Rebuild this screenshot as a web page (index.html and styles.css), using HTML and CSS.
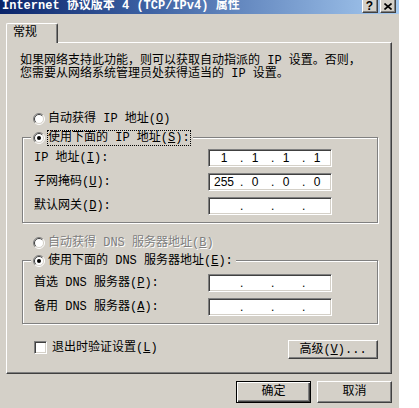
FILE: index.html
```html
<!DOCTYPE html>
<html lang="zh-CN">
<head>
<meta charset="utf-8">
<title>Internet 协议版本 4 (TCP/IPv4) 属性</title>
<link rel="stylesheet" href="styles.css">
</head>
<body>
<div class="dialog">
  <div class="titlebar">
    <span class="title">Internet 协议版本 4 (TCP/IPv4) 属性</span>
    <div class="cap-btns">
      <span class="cap-btn">?</span>
      <span class="cap-btn"><svg width="8" height="7" viewBox="0 0 8 7"><path d="M0.5 0.5L7.5 6.5M7.5 0.5L0.5 6.5" stroke="#000" stroke-width="1.6" fill="none"/></svg></span>
    </div>
  </div>

  <div class="tabs"><div class="tab">常规</div></div>

  <div class="panel">
    <p class="intro">如果网络支持此功能，则可以获取自动指派的 IP 设置。否则，<br>您需要从网络系统管理员处获得适当的 IP 设置。</p>

    <div class="radio-row first">
      <svg class="radio" width="12" height="12" viewBox="0 0 12 12"><circle cx="6" cy="6" r="5" fill="#fff"/><path d="M2.1 9.9A5.5 5.5 0 0 1 9.9 2.1" fill="none" stroke="#808080"/><path d="M9.9 2.1A5.5 5.5 0 0 1 2.1 9.9" fill="none" stroke="#fff"/><path d="M2.8 9.2A4.5 4.5 0 0 1 9.2 2.8" fill="none" stroke="#404040"/><path d="M9.2 2.8A4.5 4.5 0 0 1 2.8 9.2" fill="none" stroke="#d4d0c8"/></svg>
      <span class="lbl">自动获得 IP 地址(<u>O</u>)</span>
    </div>

    <div class="group ip-group">
      <div class="caption">
        <svg class="radio" width="12" height="12" viewBox="0 0 12 12"><circle cx="6" cy="6" r="5" fill="#fff"/><path d="M2.1 9.9A5.5 5.5 0 0 1 9.9 2.1" fill="none" stroke="#808080"/><path d="M9.9 2.1A5.5 5.5 0 0 1 2.1 9.9" fill="none" stroke="#fff"/><path d="M2.8 9.2A4.5 4.5 0 0 1 9.2 2.8" fill="none" stroke="#404040"/><path d="M9.2 2.8A4.5 4.5 0 0 1 2.8 9.2" fill="none" stroke="#d4d0c8"/><circle cx="6" cy="6" r="2" fill="#000"/></svg>
        <span class="lbl focus">使用下面的 IP 地址(<u>S</u>):</span>
      </div>
      <div class="fields">
        <span class="flabel">IP 地址(<u>I</u>):</span>
        <div class="ipbox"><span class="oct">1</span><span class="dot">.</span><span class="oct">1</span><span class="dot">.</span><span class="oct">1</span><span class="dot">.</span><span class="oct">1</span></div>
        <span class="flabel">子网掩码(<u>U</u>):</span>
        <div class="ipbox"><span class="oct">255</span><span class="dot">.</span><span class="oct">0</span><span class="dot">.</span><span class="oct">0</span><span class="dot">.</span><span class="oct">0</span></div>
        <span class="flabel">默认网关(<u>D</u>):</span>
        <div class="ipbox"><span class="oct"></span><span class="dot">.</span><span class="oct"></span><span class="dot">.</span><span class="oct"></span><span class="dot">.</span><span class="oct"></span></div>
      </div>
    </div>

    <div class="radio-row dns-auto">
      <svg class="radio" width="12" height="12" viewBox="0 0 12 12"><circle cx="6" cy="6" r="5" fill="#fff"/><path d="M2.1 9.9A5.5 5.5 0 0 1 9.9 2.1" fill="none" stroke="#808080"/><path d="M9.9 2.1A5.5 5.5 0 0 1 2.1 9.9" fill="none" stroke="#fff"/><path d="M2.8 9.2A4.5 4.5 0 0 1 9.2 2.8" fill="none" stroke="#404040"/><path d="M9.2 2.8A4.5 4.5 0 0 1 2.8 9.2" fill="none" stroke="#d4d0c8"/></svg>
      <span class="lbl disabled">自动获得 DNS 服务器地址(<u>B</u>)</span>
    </div>

    <div class="group dns-group">
      <div class="caption">
        <svg class="radio" width="12" height="12" viewBox="0 0 12 12"><circle cx="6" cy="6" r="5" fill="#fff"/><path d="M2.1 9.9A5.5 5.5 0 0 1 9.9 2.1" fill="none" stroke="#808080"/><path d="M9.9 2.1A5.5 5.5 0 0 1 2.1 9.9" fill="none" stroke="#fff"/><path d="M2.8 9.2A4.5 4.5 0 0 1 9.2 2.8" fill="none" stroke="#404040"/><path d="M9.2 2.8A4.5 4.5 0 0 1 2.8 9.2" fill="none" stroke="#d4d0c8"/><circle cx="6" cy="6" r="2" fill="#000"/></svg>
        <span class="lbl">使用下面的 DNS 服务器地址(<u>E</u>):</span>
      </div>
      <div class="fields dns-fields">
        <span class="flabel">首选 DNS 服务器(<u>P</u>):</span>
        <div class="ipbox"><span class="oct"></span><span class="dot">.</span><span class="oct"></span><span class="dot">.</span><span class="oct"></span><span class="dot">.</span><span class="oct"></span></div>
        <span class="flabel">备用 DNS 服务器(<u>A</u>):</span>
        <div class="ipbox"><span class="oct"></span><span class="dot">.</span><span class="oct"></span><span class="dot">.</span><span class="oct"></span><span class="dot">.</span><span class="oct"></span></div>
      </div>
    </div>

    <div class="bottom-row">
      <div class="check">
        <span class="checkbox"></span>
        <span class="check-label">退出时验证设置(<u>L</u>)</span>
      </div>
      <div class="btn adv">高级(<u>V</u>)...</div>
    </div>
  </div>

  <div class="footer">
    <div class="btn dlg default">确定</div>
    <div class="btn dlg">取消</div>
  </div>
</div>
</body>
</html>
```

FILE: styles.css
```css
* { box-sizing: border-box; }

html, body {
  margin: 0;
  padding: 0;
  background: #fff;
}

body {
  font-family: "Liberation Mono", "Noto Sans CJK SC", monospace;
  font-size: 12px;
  line-height: 12px;
  color: #000;
}

.dialog {
  width: 399px;
  height: 408px;
  background: #d4d0c8;
  overflow: hidden;
}

/* Title bar */
.titlebar {
  height: 14px;
  display: flex;
  align-items: flex-start;
  padding: 0 3px 0 2px;
  background: linear-gradient(to right, #0a246a 0%, #3a5ea0 35%, #a6caf0 100%);
}

.title {
  color: #fff;
  font-weight: bold;
  line-height: 13px;
  white-space: nowrap;
}

.cap-btns {
  margin-left: auto;
  display: flex;
  gap: 2px;
}

.cap-btn {
  width: 16px;
  height: 13px;
  display: flex;
  align-items: center;
  justify-content: center;
  background: #d4d0c8;
  border-left: 1px solid #fff;
  border-right: 1px solid #404040;
  border-bottom: 1px solid #404040;
  box-shadow: inset -1px -1px #808080;
  font-family: "Liberation Sans", sans-serif;
  font-weight: bold;
  font-size: 12px;
  line-height: 12px;
  padding-right: 1px;
}

/* Tabs */
.tabs {
  display: flex;
  padding: 9px 0 0 6px;
}

.tab {
  position: relative;
  z-index: 1;
  width: 52px;
  height: 20px;
  margin-bottom: -1px;
  padding: 3px 0 0 6px;
  background: #d4d0c8;
  border-left: 1px solid #fff;
  border-top: 1px solid #fff;
  border-right: 1px solid #404040;
  border-radius: 2px 2px 0 0;
  box-shadow: inset -1px 0 #808080;
}

.panel {
  margin-left: 6px;
  width: 386px;
  height: 332px;
  border: 1px solid;
  border-color: #fff #404040 #404040 #fff;
  box-shadow: inset -1px -1px #808080;
  padding: 12px 13px 0 13px;
}

.intro {
  margin: 0;
  white-space: nowrap;
  line-height: 13px;
}

/* radios */
.radio-row {
  display: flex;
  align-items: center;
  gap: 2px;
  height: 16px;
  padding-left: 13px;
}

.radio-row.first { margin-top: 30px; }
.radio-row.dns-auto { margin-top: 12px; }

.radio { flex: none; display: block; }

.lbl {
  border: 1px solid transparent;
  line-height: 14px;
  white-space: nowrap;
}

.lbl.focus { border: 1px dotted #000; }

.lbl.disabled {
  color: #808080;
  text-shadow: 1px 1px 0 #fff;
}

/* group boxes */
.group {
  margin-left: 2px;
  border: 1px solid #808080;
  box-shadow: inset 1px 1px 0 #fff, 1px 1px 0 #fff;
  padding: 0 0 7px 11px;
}

.ip-group { margin-top: 10px; }
.dns-group { margin-top: 9px; }

.caption {
  display: flex;
  align-items: center;
  gap: 2px;
  width: fit-content;
  height: 16px;
  margin: -8px 0 0 -3px;
  padding: 0 2px;
  background: #d4d0c8;
}

.fields {
  display: grid;
  grid-template-columns: 174px 124px;
  row-gap: 6px;
  align-items: center;
  margin-top: 3px;
}

.dns-fields { margin-top: 5px; }

.flabel { white-space: nowrap; }

.ipbox {
  height: 18px;
  display: grid;
  grid-template-columns: 28px 3px 28px 3px 28px 3px 28px;
  align-items: center;
  padding-left: 1px;
  background: #fff;
  border: 1px solid;
  border-color: #808080 #fff #fff #808080;
  box-shadow: inset 1px 1px 0 #404040, inset -1px -1px 0 #d4d0c8;
  font-family: "Liberation Sans", sans-serif;
  font-size: 12px;
  line-height: 12px;
}

.oct { text-align: center; }

.dot {
  overflow: visible;
  white-space: nowrap;
  text-indent: 2px;
}

/* bottom row */
.bottom-row {
  display: flex;
  justify-content: space-between;
  align-items: flex-start;
  margin-top: 16px;
  padding-left: 14px;
}

.check {
  display: flex;
  align-items: center;
  gap: 5px;
  margin-top: 1px;
}

.checkbox {
  width: 13px;
  height: 13px;
  background: #fff;
  border: 1px solid;
  border-color: #808080 #fff #fff #808080;
  box-shadow: inset 1px 1px 0 #404040, inset -1px -1px 0 #d4d0c8;
}

.check-label { white-space: nowrap; }

.btn {
  display: flex;
  align-items: center;
  justify-content: center;
  background: #d4d0c8;
  border: 1px solid;
  border-color: #fff #404040 #404040 #fff;
  box-shadow: inset -1px -1px 0 #808080;
  white-space: nowrap;
}

.btn.adv {
  width: 90px;
  height: 19px;
}

.footer {
  display: flex;
  justify-content: flex-end;
  gap: 6px;
  margin-top: 7px;
  padding-right: 7px;
}

.btn.dlg {
  width: 75px;
  height: 22px;
}

.btn.default {
  border: 1px solid #000;
  box-shadow: inset 1px 1px 0 #fff, inset -1px -1px 0 #404040, inset -2px -2px 0 #808080;
}
```
